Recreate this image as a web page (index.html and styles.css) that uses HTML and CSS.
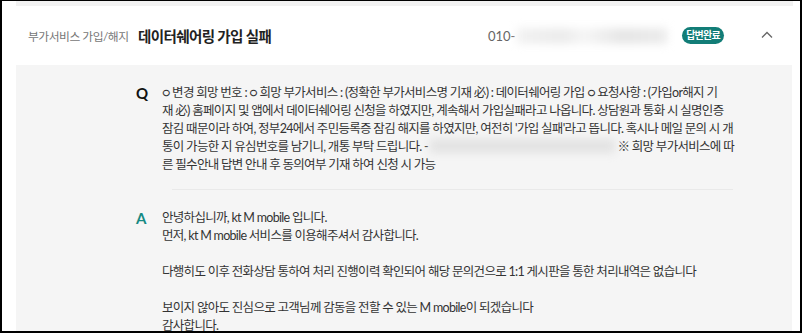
FILE: index.html
```html
<!DOCTYPE html>
<html lang="ko">
<head>
<meta charset="utf-8">
<link rel="stylesheet" href="styles.css">
</head>
<body>
<div class="frame">
  <div class="topstrip"></div>
  <div class="item">
    <div class="head">
      <div class="cat">부가서비스 가입/해지</div>
      <div class="title">데이터쉐어링 가입 실패</div>
      <div class="phone">010-<span class="blur blur-phone"></span></div>
      <div class="badge">답변완료</div>
      <svg class="chev" width="12" height="8" viewBox="0 0 12 8"><path d="M1 6.5 L6 1.5 L11 6.5" fill="none" stroke="#666" stroke-width="1.3"/></svg>
    </div>
    <div class="body">
      <div class="qa q">
        <div class="mark">Q</div>
        <div class="txt">○ 변경 희망 번호 : ○ 희망 부가서비스 : (정확한 부가서비스명 기재 必) : 데이터쉐어링 가입 ○ 요청사항 : (가입or해지 기<br>재 必) 홈페이지 및 앱에서 데이터쉐어링 신청을 하였지만, 계속해서 가입실패라고 나옵니다. 상담원과 통화 시 실명인증<br>잠김 때문이라 하여, 정부24에서 주민등록증 잠김 해지를 하였지만, 여전히 '가입 실패'라고 뜹니다. 혹시나 메일 문의 시 개<br>통이 가능한 지 유심번호를 남기니, 개통 부탁 드립니다. - <span class="blur blur-q"></span>※ 희망 부가서비스에 따<br>른 필수안내 답변 안내 후 동의여부 기재 하여 신청 시 가능</div>
      </div>
      <div class="divider"></div>
      <div class="qa a">
        <div class="mark">A</div>
        <div class="txt">안녕하십니까, kt M mobile 입니다.<br>먼저, kt M mobile 서비스를 이용해주셔서 감사합니다.<br><br>다행히도 이후 전화상담 통하여 처리 진행이력 확인되어 해당 문의건으로 1:1 게시판을 통한 처리내역은 없습니다<br><br>보이지 않아도 진심으로 고객님께 감동을 전할 수 있는 M mobile이 되겠습니다<br>감사합니다.</div>
      </div>
    </div>
  </div>
</div>
</body>
</html>
```
FILE: styles.css
```css
html, body {
  margin: 0;
  padding: 0;
  background: #fff;
}
.frame {
  width: 802px;
  height: 333px;
  box-sizing: border-box;
  border: 2px solid #000;
  border-top-width: 1px;
  padding: 0 7px 0 14px;
  overflow: hidden;
  font-family: "Lato", "Noto Sans CJK KR", sans-serif;
  color: #333;
}
.topstrip {
  height: 5px;
  background: #f2f2f2;
}
.item {
  width: 776px;
}
.head {
  height: 59px;
  display: flex;
  align-items: center;
  padding-left: 12px;
  background: #fff;
}
.cat {
  width: 110px;
  font-size: 11.8px;
  color: #777;
  letter-spacing: -0.5px;
}
.title {
  width: 350px;
  font-size: 14.5px;
  font-weight: 700;
  color: #222;
  letter-spacing: -0.6px;
}
.phone {
  width: 194px;
  font-size: 13px;
  color: #666;
  display: flex;
  align-items: center;
}
.blur {
  display: inline-block;
  background: #e3e3e3;
  filter: blur(4px);
}
.blur-phone {
  width: 150px;
  height: 16px;
  margin-left: 2px;
  background: linear-gradient(90deg, #f2f2f2 0%, #ebebeb 30%, #f6f6f6 45%, #e6e6e6 70%, #ececec 100%);
}
.blur-q {
  width: 185px;
  height: 14px;
  vertical-align: -2px;
  margin-right: 2px;
}
.badge {
  width: 42px;
  height: 17px;
  border-radius: 9px;
  background: #127d77;
  color: #fff;
  font-size: 10px;
  font-weight: 700;
  letter-spacing: -0.8px;
  line-height: 17px;
  text-align: center;
}
.chev {
  margin-left: 37px;
  margin-top: -2px;
}
.body {
  background: #f5f5f5;
  height: 266px;
  padding-top: 19px;
  box-sizing: border-box;
}
.qa {
  display: flex;
  padding-left: 120px;
}
.mark {
  width: 26px;
  font-size: 15px;
  font-weight: 700;
  line-height: 18px;
  color: #111;
}
.a .mark {
  color: #168a83;
}
.txt {
  font-size: 12.5px;
  line-height: 18px;
  letter-spacing: -0.7px;
  white-space: nowrap;
  color: #333;
}
.divider {
  margin: 15px 0 19px 156px;
  width: 561px;
  height: 1px;
  background: #e9e9e9;
}
```
